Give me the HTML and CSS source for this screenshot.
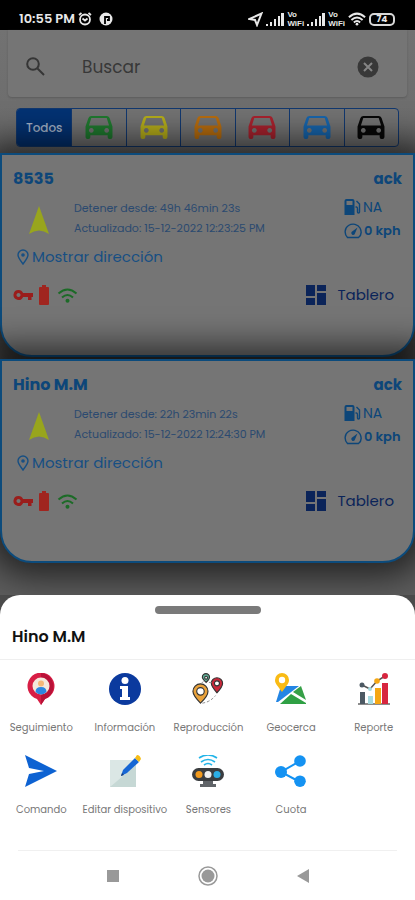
FILE: index.html
```html
<!DOCTYPE html>
<html lang="es">
<head>
<meta charset="utf-8">
<meta name="viewport" content="width=device-width, initial-scale=1">
<title>Dispositivos</title>
<link rel="stylesheet" href="styles.css">
</head>
<body>
	<svg class="sprite" aria-hidden="true">
		<symbol id="car" viewBox="0 0 28 26">
			<path fill-rule="evenodd" d="M6 1h16q2 0 3 2l3 9v11q0 2-2 2h-1q-2 0-2-2v-2H5v2q0 2-2 2H2q-2 0-2-2V12l3-9q1-2 3-2zM6 3L3.500 11h21L22 3zM6 13.500a2.500 2.500 0 1 0 .01 0zM22 13.500a2.500 2.500 0 1 0 .01 0z"/>
		</symbol>
		<symbol id="arrow" viewBox="0 0 20 28"><path d="M10 0l10 28q-10-7-20 0z"/></symbol>
		<symbol id="pin" viewBox="0 0 12 16">
			<path d="M6 15C3 11 1 8.500 1 6a5 5 0 0 1 10 0c0 2.500-2 5-5 9z" fill="none" stroke="currentColor" stroke-width="1.400"/>
			<circle cx="6" cy="6" r="1.800"/>
		</symbol>
		<symbol id="fuel" viewBox="0 0 16 16">
			<path fill-rule="evenodd" d="M0 2q0-2 2-2h6q2 0 2 2v14H0zM2 2v4h6V2z"/>
			<path d="M11 8h1q1 0 1 2v3q0 1 1 1t1-1V5l-3-3" fill="none" stroke="currentColor" stroke-width="1.400"/>
		</symbol>
		<symbol id="gauge" viewBox="0 0 18 16">
			<path d="M3.500 14.500C0 11 .5 5 4.500 2.500S14 1 16 5s1 7.500-1.500 9.500z" fill="none" stroke="currentColor" stroke-width="1.400"/>
			<path d="M13.500 4.500l-3 7a2 2 0 0 1-3-2.500z"/>
		</symbol>
		<symbol id="key" viewBox="0 0 20 12">
			<path fill-rule="evenodd" d="M5.500 1a5 5 0 0 1 4.600 3H20v4h-1.500v3h-3.500V8h-4.900A5 5 0 1 1 5.500 1zm0 3a2 2 0 1 0 .01 0z"/>
		</symbol>
		<symbol id="battery" viewBox="0 0 10 20"><path d="M3 0h4v2h2q1 0 1 1v16q0 1-1 1H1q-1 0-1-1V3q0-1 1-1h2z"/></symbol>
		<symbol id="wifi" viewBox="0 0 20 15">
			<path d="M1 5.500q9-8 18 0M4.500 9.500q5.500-5 11 0" fill="none" stroke="currentColor" stroke-width="2"/>
			<circle cx="10" cy="12.800" r="2"/>
		</symbol>
		<symbol id="wifi-full" viewBox="0 0 20 15">
			<path d="M1 5.500q9-8 18 0M3.800 8.500q6.200-5.500 12.400 0M6.500 11.300q3.500-3 7 0" fill="none" stroke="currentColor" stroke-width="2.200"/>
			<circle cx="10" cy="13.300" r="1.500"/>
		</symbol>
		<symbol id="board" viewBox="0 0 20 20"><path d="M0 0h9v11H0zM11 0h9v6h-9zM0 13h9v7H0zM11 8h9v12h-9z"/></symbol>
		<symbol id="signal" viewBox="0 0 18 13"><path d="M0 11h2v2H0zM4 9h2v4H4zM8 6h2v7H8zM12 3h2v10h-2zM15 0h3v13h-3z"/></symbol>
	</svg>

	<header class="status">
		<div class="status-side">
			<span class="clock">10:55 PM</span>
			<svg width="14" height="14" viewBox="0 0 14 14" fill="none" stroke="currentColor" stroke-width="1.800"><circle cx="7" cy="7.500" r="5"/><path d="M4.500 6.500L7 8.500l2.500-2M1 3l2.500-2M13 3l-2.500-2"/></svg>
			<svg class="app-dot" width="14" height="14" viewBox="0 0 14 14"><circle cx="7" cy="7" r="6.500" fill="currentColor"/><path d="M6 12V5h4v3H8" fill="none" stroke="#000" stroke-width="1.800"/></svg>
		</div>
		<div class="status-side">
			<svg width="15" height="15" viewBox="0 0 15 15" fill="none" stroke="currentColor" stroke-width="2"><path d="M13.500 1.500L9 13 7 8 1.500 7z"/></svg>
			<svg class="signal" width="18" height="13"><use href="#signal"/></svg>
			<span class="vowifi"><span>Vo</span><span>WiFi</span></span>
			<svg class="signal" width="18" height="13"><use href="#signal"/></svg>
			<span class="vowifi"><span>Vo</span><span>WiFi</span></span>
			<svg width="18" height="14"><use href="#wifi-full"/></svg>
			<span class="charge">74</span>
		</div>
	</header>

	<main>
		<form class="search">
			<svg class="search-icon" width="19" height="19" viewBox="0 0 19 19" fill="none" stroke="currentColor" stroke-width="2"><circle cx="7" cy="7" r="5.800"/><path d="M11.500 11.500l6.500 6.500"/></svg>
			<input type="text" placeholder="Buscar" aria-label="Buscar">
			<button type="reset" class="clear" aria-label="Borrar">
				<svg width="22" height="22" viewBox="0 0 22 22"><circle cx="11" cy="11" r="10.500" fill="#383838"/><path d="M7 7l8 8M15 7l-8 8" stroke="#858585" stroke-width="2"/></svg>
			</button>
		</form>

		<nav class="tabs">
			<button class="active">Todos</button>
			<button class="green" aria-label="Verde"><svg><use href="#car"/></svg></button>
			<button class="yellow" aria-label="Amarillo"><svg><use href="#car"/></svg></button>
			<button class="orange" aria-label="Naranja"><svg><use href="#car"/></svg></button>
			<button class="red" aria-label="Rojo"><svg><use href="#car"/></svg></button>
			<button class="blue" aria-label="Azul"><svg><use href="#car"/></svg></button>
			<button class="black" aria-label="Negro"><svg><use href="#car"/></svg></button>
		</nav>

		<section class="devices">
			<article class="card">
				<div class="card-head"><h2>8535</h2><span>ack</span></div>
				<div class="card-body">
					<svg class="arrow" width="22" height="28"><use href="#arrow"/></svg>
					<div class="times">
						<p>Detener desde: 49h 46min 23s</p>
						<p>Actualizado: 15-12-2022 12:23:25 PM</p>
					</div>
					<div class="meters">
						<p><svg width="17" height="16"><use href="#fuel"/></svg>NA</p>
						<p class="speed"><svg width="18" height="16"><use href="#gauge"/></svg>0 kph</p>
					</div>
				</div>
				<a class="address" href="#"><svg width="12" height="16"><use href="#pin"/></svg>Mostrar dirección</a>
				<div class="card-foot">
					<svg class="key" width="20" height="12"><use href="#key"/></svg>
					<svg class="battery" width="10" height="20"><use href="#battery"/></svg>
					<svg class="wifi" width="21" height="15"><use href="#wifi"/></svg>
					<button class="board"><svg width="20" height="20"><use href="#board"/></svg>Tablero</button>
				</div>
			</article>

			<article class="card">
				<div class="card-head"><h2>Hino M.M</h2><span>ack</span></div>
				<div class="card-body">
					<svg class="arrow" width="22" height="28"><use href="#arrow"/></svg>
					<div class="times">
						<p>Detener desde: 22h 23min 22s</p>
						<p>Actualizado: 15-12-2022 12:24:30 PM</p>
					</div>
					<div class="meters">
						<p><svg width="17" height="16"><use href="#fuel"/></svg>NA</p>
						<p class="speed"><svg width="18" height="16"><use href="#gauge"/></svg>0 kph</p>
					</div>
				</div>
				<a class="address" href="#"><svg width="12" height="16"><use href="#pin"/></svg>Mostrar dirección</a>
				<div class="card-foot">
					<svg class="key" width="20" height="12"><use href="#key"/></svg>
					<svg class="battery" width="10" height="20"><use href="#battery"/></svg>
					<svg class="wifi" width="21" height="15"><use href="#wifi"/></svg>
					<button class="board"><svg width="20" height="20"><use href="#board"/></svg>Tablero</button>
				</div>
			</article>
		</section>
	</main>

	<section class="sheet">
		<div class="handle"></div>
		<h1>Hino M.M</h1>
		<div class="actions">
			<button>
				<svg viewBox="0 0 32 32"><path d="M16 32l-4-6A13.500 13.500 0 1 1 20 26z" fill="#d81e45"/><path d="M16 32V0a13.500 13.500 0 0 1 4 26z" fill="#b81238"/><circle cx="16" cy="13" r="8.500" fill="#f4e8dc"/><circle cx="16" cy="10.500" r="3" fill="#f5b878"/><path d="M10.500 19q0-5 5.500-5t5.500 5q-5.500 5-11 0z" fill="#2d86e0"/></svg>
				Seguimiento
			</button>
			<button>
				<svg viewBox="0 0 32 32"><circle cx="16" cy="16" r="16" fill="#0b3a9e"/><circle cx="16" cy="7.500" r="3.500" fill="#fff"/><path d="M11 13h8v11h2v3H11v-3h2v-8h-2z" fill="#fff"/></svg>
				Información
			</button>
			<button>
				<svg viewBox="0 0 34 32"><g stroke="#333" stroke-width="1.200"><path d="M15 9c-3-3-4-4-4-5.500a3.800 3.800 0 0 1 7.600 0C18.600 5 17 7 15 9z" fill="#5fae96"/><circle cx="15" cy="4" r="1.500" fill="#fff"/><path d="M26.500 20C22 15 20.500 13 20.500 10a6 6 0 0 1 12 0c0 3-2 6-6 10z" fill="#c9283a"/><circle cx="26.500" cy="10" r="2.700" fill="#fff"/><path d="M9 31C3 25 1 22 1 18.500a8 8 0 0 1 16 0C17 22 14.500 26 9 31z" fill="#e9a23b"/><circle cx="9" cy="18.500" r="4" fill="#fff"/></g><path d="M11 31q8-1 14-8M18 9l5 0M12 8l-2 2" fill="none" stroke="#888" stroke-dasharray="3 2"/></svg>
				Reproducción
			</button>
			<button>
				<svg viewBox="0 0 32 32"><path d="M6 13h18L3 29H1z" fill="#2385e4"/><path d="M26 13l5 14-13-8z" fill="#36a047"/><path d="M5 31l11-10 15 9v1z" fill="#2fa044"/><path d="M7 19C3 13 0 11 0 7a7 7 0 0 1 14 0c0 4-3 6-7 12z" fill="#f9bb15"/><circle cx="7" cy="7" r="3.200" fill="#fff"/></svg>
				Geocerca
			</button>
			<button>
				<svg viewBox="0 0 32 32"><path d="M0 31h32" stroke="#666" stroke-width="1.500"/><path d="M2 19h5v12H2z" fill="#4c5963"/><path d="M10 23h5v8h-5z" fill="#a6dbe0"/><path d="M17 15h6v16h-6z" fill="#f5a714"/><path d="M24 10h6v21h-6z" fill="#d7263f"/><path d="M4 12l8 4 7-8 8-5" fill="none" stroke="#555" stroke-width="1.500"/><circle cx="4" cy="12" r="2.500" fill="#4c5963"/><circle cx="12" cy="16" r="2" fill="#a6dbe0"/><circle cx="19" cy="8" r="2.800" fill="#f5a714"/><circle cx="27" cy="3" r="3" fill="#d7263f"/></svg>
				Reporte
			</button>
			<button>
				<svg viewBox="0 0 32 32"><path d="M0 0l32 16L0 32l4-13 15-3-15-3z" fill="#0d62d2"/></svg>
				Comando
			</button>
			<button>
				<svg viewBox="0 0 32 32"><path d="M1 5h26v27H1z" fill="#dbe7e5"/><path d="M1 32L27 10v22z" fill="#c6d8d5"/><path d="M12 21l2-6L26 3l4 4-12 11z" fill="#1667d4"/><path d="M26 3l2-3q3 0 4 4l-2 3z" fill="#f7bd16"/><path d="M12 21l1-3 2 2z" fill="#173d79"/></svg>
				Editar dispositivo
			</button>
			<button>
				<svg viewBox="0 0 32 32"><path d="M7 3q9-6 18 0M9 7q7-5 14 0M12 10q4-3 8 0" fill="none" stroke="#22b4e8" stroke-width="1.700"/><rect y="13" width="32" height="13" rx="6.500" fill="#3a3d40"/><path d="M11 26h10v3h3v3H8v-3h3z" fill="#606468"/><circle cx="7" cy="19.500" r="3.500" fill="#f29a1d"/><circle cx="16" cy="19.500" r="3.500" fill="#f0f0f0"/><circle cx="25" cy="19.500" r="3.500" fill="#2baee6"/></svg>
				Sensores
			</button>
			<button>
				<svg viewBox="0 0 32 32"><path d="M25 6L6 17l19 10" fill="none" stroke="#1492f2" stroke-width="2"/><g fill="#1492f2"><circle cx="25" cy="6" r="5.800"/><circle cx="6" cy="17" r="6"/><circle cx="25" cy="26.200" r="5.800"/></g></svg>
				Cuota
			</button>
		</div>
		<nav class="system-nav">
			<button aria-label="Recientes"><svg width="14" height="14" viewBox="0 0 14 14"><path d="M1 1h12v12H1z" fill="#999"/></svg></button>
			<button aria-label="Inicio"><svg width="20" height="20" viewBox="0 0 20 20"><circle cx="10" cy="10" r="9" fill="none" stroke="#999" stroke-width="1.500"/><circle cx="10" cy="10" r="6.500" fill="#999"/></svg></button>
			<button aria-label="Atrás"><svg width="14" height="14" viewBox="0 0 14 14"><path d="M13 0v14L1 7z" fill="#999"/></svg></button>
		</nav>
	</section>
</body>
</html>
```

FILE: styles.css
```css
*{box-sizing: border-box;}
body{
	margin: 0;
	min-height: 100vh;
	display: flex;
	flex-direction: column;
	background: #4c4c4c;
	font-family: Poppins, Inter, "Noto Sans", sans-serif;
}
h1,h2,p{margin: 0;}
button{
	margin: 0;
	padding: 0;
	border: 0;
	background: none;
	font-family: inherit;
	color: inherit;
}
svg{display: block;flex: none;fill: currentColor;}
svg[fill="none"]{fill: none;}
.sprite{display: none;}

/* status bar */
.status{
	display: flex;
	justify-content: space-between;
	height: 30px;
	padding: 8px 20px 0 19px;
	background: #000;
	color: #e8e8e8;
}
.status-side{display: flex;align-items: center;gap: 3px;height: 22px;}
.clock{font-size: 13px;font-weight: 600;line-height: 22px;}
.app-dot{margin-left: 4px;}
.vowifi{
	display: grid;
	font-family: "Liberation Sans", sans-serif;
	font-size: 8px;
	font-weight: 700;
	line-height: 9px;
}
.charge{
	width: 26px;
	border: 2px solid #d8d8d8;
	border-radius: 5px;
	font-size: 9px;
	font-weight: 700;
	line-height: 9px;
	text-align: center;
}

/* search and filters */
main{
	flex: 1;
	padding-bottom: 31px;
	background: linear-gradient(#727272, #6c6c6c 110px, #5c5c5c 160px);
}
.search{
	display: flex;
	align-items: center;
	height: 67px;
	margin: 0 8px;
	padding: 6px 28px 0 18px;
	background: #757575;
	border-radius: 0 0 4px 4px;
	box-shadow: 0 1px 2px #5b5b5b;
	color: #353535;
}
.search input{
	flex: 1;
	min-width: 0;
	margin-left: 37px;
	padding: 0;
	border: 0;
	outline: 0;
	background: none;
	font: 17px/24px Poppins, Inter, sans-serif;
	color: #333;
}
.search input::placeholder{color: #383838;opacity: 1;}
.tabs{
	display: grid;
	grid-template-columns: repeat(7, 1fr);
	height: 39px;
	margin: 11px 16px 6px;
	border: 1px solid #12386f;
	border-radius: 4px;
	background: #727272;
	overflow: hidden;
}
.tabs button{
	display: flex;
	align-items: center;
	justify-content: center;
	border-left: 1px solid #12386f;
	font-size: 12px;
	font-weight: 500;
}
.tabs svg{width: 28px;height: 25px;}
.tabs .active{background: #033273;color: #a4b2c8;border: 0;}
.green{color: #1f7a2f;}
.yellow{color: #b5ad1a;}
.orange{color: #b86d0e;}
.red{color: #a9222e;}
.blue{color: #1765ac;}
.black{color: #080808;}

/* devices */
.devices{display: grid;gap: 2px;}
.card{
	min-height: 204px;
	padding: 13px 11px 0;
	background: #757575;
	border: 2px solid #0c4b7c;
	border-radius: 0 0 32px 32px;
	box-shadow: 0 0 32px 14px rgba(0,0,0,.6);
	color: #0d4679;
}
.card-head{
	display: flex;
	justify-content: space-between;
	font-size: 15px;
	font-weight: 700;
	line-height: 22px;
}
.card-head h2{font-size: 16px;}
.card-body{
	display: flex;
	padding-top: 5px;
}
.arrow{margin: 11px 24px 0 15px;color: #98a51d;}
.times{
	flex: 1;
	padding-top: 3px;
	font-size: 11px;
	line-height: 20px;
	color: #2b4a70;
}
.meters{
	width: 58px;
	font-size: 14px;
	line-height: 24px;
	white-space: nowrap;
}
.meters p{display: flex;align-items: center;gap: 2px;}
.meters .speed{font-size: 13px;font-weight: 600;}
.address{
	display: flex;
	align-items: center;
	gap: 3px;
	padding: 2px 0 0 4px;
	font-size: 15px;
	line-height: 24px;
	color: #174f83;
	text-decoration: none;
}
.card-foot{
	display: flex;
	align-items: center;
	padding-top: 14px;
}
.key{color: #9a1d1b;}
.battery{margin: 0 8px 0 6px;color: #a0251f;}
.wifi{color: #1c6b27;}
.board{
	display: flex;
	align-items: center;
	gap: 11px;
	margin-left: auto;
	padding-right: 8px;
	font-size: 15px;
	line-height: 24px;
	color: #0b2459;
}

/* bottom sheet */
.sheet{
	padding-top: 11px;
	background: #fff;
	border-radius: 20px 20px 0 0;
}
.handle{
	width: 106px;
	height: 8px;
	margin: 0 auto;
	border-radius: 4px;
	background: #7a7a7a;
}
.sheet h1{
	padding: 11px 12px 10px;
	border-bottom: 1px solid #efefef;
	font-size: 16px;
	font-weight: 600;
	line-height: 24px;
	color: #111;
}
.actions{
	display: grid;
	grid-template-columns: repeat(5, 1fr);
	row-gap: 18px;
	padding-top: 13px;
}
.actions button{
	display: flex;
	flex-direction: column;
	align-items: center;
	gap: 14px;
	font-size: 10px;
	line-height: 18px;
	white-space: nowrap;
	color: #777;
}
.actions svg{width: 32px;height: 32px;}
.system-nav{
	display: flex;
	justify-content: center;
	align-items: center;
	gap: 78px;
	height: 50px;
	margin: 31px 18px 0;
	border-top: 1px solid #f0f0f0;
}
```
